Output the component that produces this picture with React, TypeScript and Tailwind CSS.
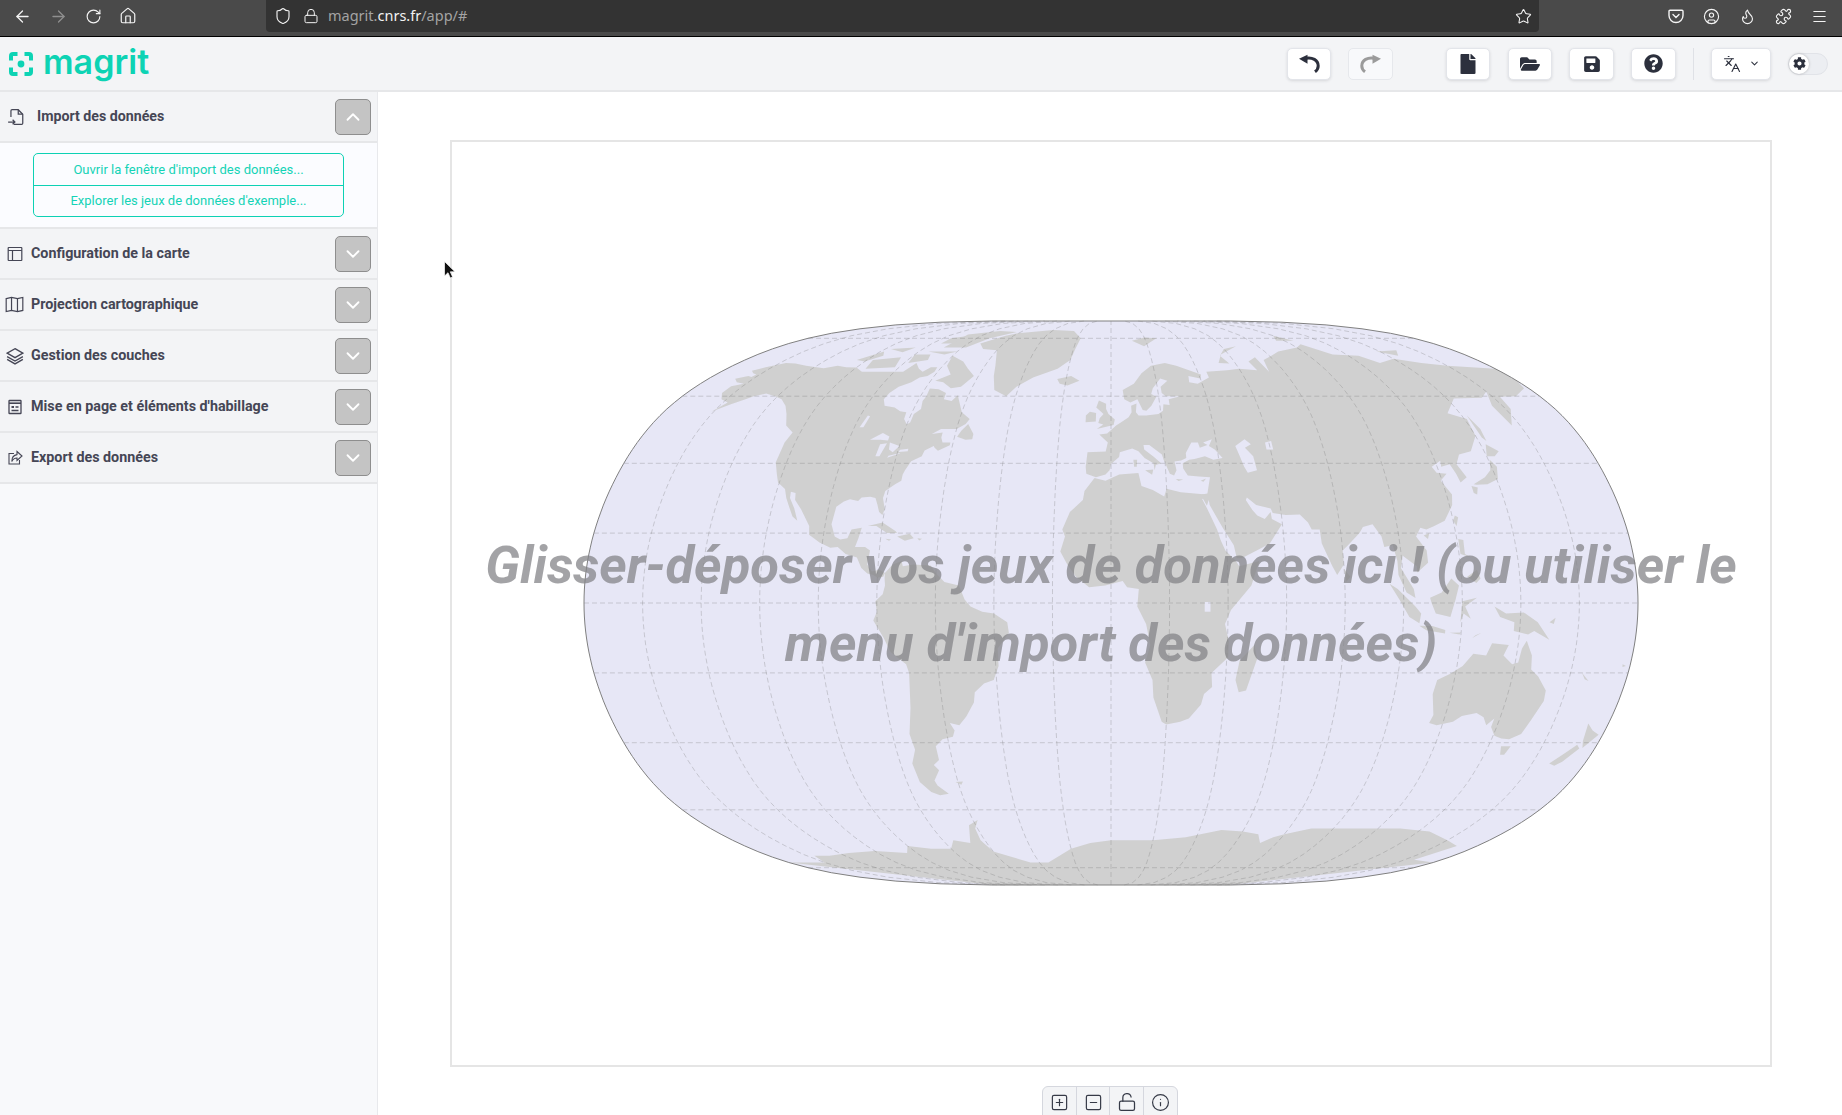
import React from "react";
import {
  ArrowLeft,
  ArrowRight,
  ChevronDown,
  ChevronUp,
  CircleUser,
  Flame,
  Home,
  Info,
  Languages,
  Lock,
  LockOpen,
  Menu,
  Puzzle,
  RotateCw,
  Shield,
  SquareMinus,
  SquarePlus,
  Star,
} from "lucide-react";
import { FaCog, FaFile, FaFolderOpen, FaQuestionCircle, FaSave } from "react-icons/fa";

type Pt = [number, number];

// natural earth 2, same as the app's default projection
const K = 198;
const CX = 659;
const CY = 461;
const project = (lon: number, lat: number): Pt => {
  const l = (lon * Math.PI) / 180;
  const p = (lat * Math.PI) / 180;
  const p2 = p * p;
  const p4 = p2 * p2;
  const p6 = p2 * p4;
  const x = l * (0.84719 - 0.13063 * p2 + p6 * p6 * (-0.04515 + 0.05494 * p2 - 0.02326 * p4 + 0.00331 * p6));
  const y = p * (1.01183 + p4 * p4 * (-0.02625 + 0.01926 * p2 - 0.00396 * p4));
  return [CX + K * x, CY - K * y];
};

const toPath = (pts: Pt[], close = true) =>
  pts
    .map((c, i) => {
      const [x, y] = project(c[0], c[1]);
      return `${i ? "L" : "M"}${x.toFixed(1)} ${y.toFixed(1)}`;
    })
    .join("") + (close ? "Z" : "");

const range = (from: number, to: number, step: number) => {
  const out: number[] = [];
  if (step > 0) for (let v = from; v <= to; v += step) out.push(v);
  else for (let v = from; v >= to; v += step) out.push(v);
  return out;
};

const LAND: Pt[][] = [
  // north america
  [[-168,65.6],[-164,66.5],[-162,66.2],[-161.5,67],[-164,67.5],[-166.5,68.3],[-163,69.5],[-157,71],[-152,70.8],[-145,70],[-140,69.6],[-135,69.2],[-130,70],[-125,69.5],[-120,69.4],[-115,68],[-110,68],[-105,68],[-100,68],[-96,68],[-94,71],[-90,69],[-87,68],[-85,69.5],[-82,69.5],[-81.5,68],[-83,66.5],[-86,66],[-88,64.5],[-92,63],[-94,61],[-94.5,59],[-92.5,57],[-88,56.5],[-85,55.3],[-82.3,55],[-82,53],[-80,51.3],[-79,52],[-79,54.5],[-77,56],[-78,58.5],[-77.5,60],[-78,62.4],[-74,62.2],[-70,61],[-69.5,59],[-66,58.5],[-64.5,60.3],[-62,57.5],[-60,55],[-56,53],[-57,51.5],[-60,50],[-66,50],[-69,48.5],[-65,49],[-65,47.5],[-64,46],[-61,46],[-61,45.2],[-65,43.6],[-66.5,44.5],[-67,45],[-70,43.7],[-70.5,42],[-74,40.6],[-75.5,38],[-76,36.8],[-76,35],[-78,34],[-81,32],[-81.3,30],[-80,26.8],[-80.5,25.2],[-81.8,26],[-82.8,28],[-84,30],[-86,30.4],[-89,30.2],[-90,29.2],[-93,29.7],[-95,29],[-97.3,27.5],[-97.5,25],[-97.8,22.5],[-96,19],[-94,18.2],[-91.5,18.5],[-90.5,21],[-87,21.5],[-87.7,18.5],[-88.5,16],[-85,16],[-83.2,15],[-83.7,11],[-82,9],[-79.5,9.5],[-77.5,8.6],[-78,7.5],[-80,7.3],[-81.5,8],[-83.5,8.4],[-85.7,10],[-87.5,13],[-91.5,14],[-94.5,16],[-97,15.8],[-101,17.3],[-105,19.5],[-105.5,22],[-108,25],[-109.5,26.7],[-112.5,29.5],[-113,31.5],[-114.8,31.8],[-114.5,30],[-112,27],[-110,23.5],[-112,24.7],[-114,27.5],[-115.8,30],[-117.2,32.6],[-120.5,34.5],[-122,37],[-124,40.3],[-124,46],[-123,49],[-127,51],[-130,54.5],[-133,57],[-137,59],[-141,60],[-146,60.8],[-150,60],[-152,59],[-156,57.5],[-161,55.2],[-158,58],[-162,59],[-165,61],[-165,63.2],[-161,64],[-165,64.5]],
  // greenland + arctic canada
  [[-73,78],[-68,76],[-60,75.5],[-55,70],[-53,66.5],[-50,62],[-44,60],[-41,63],[-35,66],[-25,69],[-20,72],[-19,76],[-18,80],[-25,83],[-40,83.5],[-60,82],[-65,81]],
  [[-80,73.5],[-72,71.5],[-67,69],[-62,66.5],[-65,63],[-69,62.5],[-74,64.5],[-78,65],[-73,67],[-78,70]],
  [[-117,72],[-105,73],[-102,69.5],[-115,69]],
  [[-90,76.5],[-78,76.5],[-72,80],[-62,82.5],[-75,83],[-90,81.5]],
  [[-125,72],[-118,75],[-115,73.5],[-120,71.5]],
  [[-95,75],[-80,75],[-85,74]],
  [[-100,74],[-92,74],[-90,72],[-98,71]],
  [[-117,76],[-105,76.5],[-108,74.8]],
  [[-95,80],[-87,81],[-88,78],[-95,78]],
  [[-59,47.7],[-55.5,46.8],[-53,47],[-53,48.5],[-56,51.5],[-58,49.5]],
  // caribbean
  [[-85,22],[-80,23],[-75,20.5],[-74.5,20],[-78,20],[-82,22]],
  [[-74.3,19],[-70,19.8],[-68.5,18.5],[-71.5,17.8]],
  [[-78.3,18.4],[-76.3,18.2],[-77,17.8]],
  [[-67.2,18.5],[-65.6,18.4],[-66.5,17.9]],
  // south america
  [[-77.5,8.6],[-75,11],[-72,12],[-71.5,10.5],[-68,11],[-62,10.7],[-60,8.5],[-57,6],[-52,5],[-50,1],[-48,-1],[-44,-2.5],[-40,-3],[-35.5,-5.5],[-35,-8.5],[-39,-13],[-39,-18],[-41,-22],[-44.5,-23],[-48,-25.5],[-48.7,-28.5],[-52,-32.5],[-55,-35],[-58.3,-34.3],[-57,-36.5],[-58,-38.3],[-62,-39],[-65,-41],[-65,-45],[-67.5,-46.5],[-66,-48],[-69,-51],[-68.5,-52.5],[-65.2,-55],[-69,-55.5],[-72,-54.5],[-75,-51.5],[-75.5,-46],[-73,-42],[-73.7,-37.5],[-71.5,-30],[-70.3,-20],[-71,-17.5],[-76,-14],[-78,-10],[-81.3,-5],[-80,-2.5],[-80.5,0.5],[-78,2.5],[-77.3,5],[-77.5,7]],
  [[-61,-51.5],[-58,-51.3],[-59,-52.3]],
  // africa
  [[-6,35.8],[-2,35],[3,36.8],[10,37.2],[11,33.5],[15,32.3],[19,30.5],[20,32.7],[25,31.7],[32,31.2],[34.5,31],[32.5,29.7],[34,27],[37,21],[38,18],[39.5,15],[43,12],[44,10.5],[51,12],[48,5],[41,-2],[39,-6],[40.5,-11],[40.5,-15.5],[35,-20],[35.5,-24],[32.8,-26],[32,-29],[28,-33],[25,-34],[20,-34.8],[18.3,-34],[15,-27],[14.5,-22],[11.8,-17],[13.5,-12],[12,-6],[9,-1],[9.5,4],[5.5,4.5],[4,6.3],[-2,5],[-7.5,4.5],[-12,7.5],[-15,11],[-17.5,14.7],[-16,19],[-17,21],[-14.5,26],[-10,29.5],[-9.5,32]],
  // eurasia
  [[-5.5,36],[-9,37],[-9.3,39],[-8.8,43.2],[-2,43.4],[-1.2,46],[-4.5,48.4],[-1.5,48.7],[2,51],[4,52],[7,53.5],[8.3,55],[8.2,57],[10.5,57.7],[10,55],[11,54],[14,54],[19,54.5],[21,55.5],[21.5,57.5],[24,57.2],[24,59],[29,60],[23,60],[21.5,61],[21.5,63],[25,65],[22,65.7],[18,62.5],[17,60.7],[19,59.8],[16.5,57],[14.3,55.5],[12.8,55.7],[11,59],[8,58],[5.5,59],[5,62],[10,64],[14,67.5],[19,70],[26,71],[31,70],[41,67],[40,65.7],[35,66.5],[34.5,64.5],[38,64],[44,66],[44,68],[54,68.5],[60,69],[68,68.5],[67,71.5],[72,73],[73,68],[75,72],[81,73.5],[87,75],[100,76.5],[105,77.7],[113,74],[125,73.5],[130,71],[140,72.5],[150,71],[160,70],[170,69.5],[180,69],[180,65],[178,62.5],[170,60],[163,59.8],[162,56],[156.7,51],[155.7,57],[160,61.5],[155,59.5],[143,59.3],[135,54.7],[141,53],[140,48],[135,43.5],[130,42.5],[127.5,39.7],[129.4,36],[126.5,34.5],[126,37],[125,39.7],[121.5,39],[122,40.7],[118,39],[119,37.3],[122.5,37],[119.5,35],[122,31],[121,28],[117,23.5],[113,22],[110,21],[108,21.5],[106,19],[109,15],[109,11.5],[105,8.7],[105,10.5],[102,12.5],[100.5,13.5],[99.5,10],[103.5,4],[104,1.4],[101,3],[98.5,8],[98.5,12],[97.5,16.5],[94.5,16],[94,19],[91.5,22.5],[88,21.7],[86.5,20],[82,16.5],[80,15],[80,11],[77.5,8],[76,10.5],[73,17],[72.8,21],[70,21],[69,23],[66.5,25.3],[61.5,25.2],[57,25.7],[56.5,27],[51.5,28],[48.5,30.2],[48,29.5],[50,26.5],[51.5,25],[54,24],[56.3,26],[56.5,24],[59.8,22.5],[55,17],[52,15.7],[45,12.8],[43.3,12.8],[42.5,16.5],[39,21.5],[35,28],[34.8,29.5],[34,27.8],[32.8,29.8],[32.5,31],[34.5,31.3],[36,36],[32,36.2],[28,36.5],[26.5,38.5],[26.5,40],[29,41],[31,41.2],[35,42],[38,41],[41.5,41.5],[39,44],[37,45],[38.5,47],[35,46],[36.5,45.3],[33.5,44.5],[33,46],[30.5,46],[28,43],[28,41.5],[26,40.8],[23.5,40.5],[24,38],[23,36.5],[21.5,37],[19.5,41],[19,42.5],[14.5,45.3],[12.3,45.3],[12.5,44],[16,41.8],[18.5,40],[16.5,39.5],[16,38],[15.7,40],[12.5,41.5],[10.3,43.5],[8,44.3],[3.3,43.2],[3,41.8],[0,39.8],[-0.5,38],[-2,36.8]],
  // european and arctic islands
  [[-5.5,50],[1,51.2],[1.5,52.8],[-1,54.5],[-2,56],[-2,57.6],[-5,58.6],[-6,56.5],[-3,54.5],[-4.5,53.2],[-5,51.8],[-3,51.3]],
  [[-10,52],[-6,52.2],[-6,54.8],[-8.5,55.2],[-10,54]],
  [[-24,65.5],[-18,66.5],[-14,65],[-19,63.4],[-22.5,64]],
  [[12,79],[20,80.3],[27,80],[18,77]],
  [[52,71],[56,74],[68,77],[60,76],[55,73.5],[57,70.8]],
  [[95,79],[105,79],[100,81]],
  [[138,75],[150,75.5],[145,73.5]],
  [[8.3,41],[9.7,41],[9.5,39],[8.5,39]],
  [[12.5,38],[15.5,38.2],[15,36.7]],
  [[23.5,35.5],[26.2,35.3],[24.5,34.9]],
  [[32.5,35],[34.5,35.6],[33.5,34.7]],
  // east asia islands
  [[142,54],[143.5,50],[143,46.5],[142,47.5]],
  [[140,42],[142,45.5],[145.5,43.5],[143,42]],
  [[131,34],[136,36],[139,38],[140.5,41],[142,39],[140.5,35.5],[136,34],[132,33.8]],
  [[130,33.5],[132,33],[131,31],[130,31.5]],
  [[121,25],[122,24.5],[120.8,22],[120,23.5]],
  [[108.7,19.3],[110.8,20],[110,18.3]],
  [[120.5,18.3],[122.2,18],[122,14],[124,13],[120.5,14]],
  [[122,7.5],[125.5,9.5],[126.5,7],[125,5.7]],
  [[95.3,5.5],[98,4],[104,-1],[106,-3],[105.5,-5.8],[102,-4],[98.5,1]],
  [[105.5,-6.5],[110,-6.6],[114.5,-7.7],[114.5,-8.7],[108,-7.8]],
  [[109,1.5],[113,3],[116.5,7],[119,5],[117.7,1],[116,-4],[111,-3],[109.5,0]],
  [[119.5,-5.5],[120,0.5],[125,1.5],[121,-1],[123,-4.5],[120.5,-3]],
  [[131,-1],[135,-3],[141,-2.7],[146,-5.5],[150.5,-10.5],[145,-8],[143,-9],[138,-8],[138,-5.5],[133,-4]],
  [[124,-10],[127,-8.5],[125,-9.2]],
  [[116,-8.5],[120,-8.4],[119.5,-9]],
  [[80,9.7],[82,7.5],[80.5,6]],
  [[49.3,-12],[50.5,-16],[47.5,-25],[45,-25.5],[43.5,-22],[44.5,-16.5]],
  // oceania
  [[114,-22],[113.5,-26],[115.7,-32],[115,-34.3],[118,-35],[123.5,-34],[126,-32.3],[131,-31.5],[134,-32.7],[136,-35],[138,-33],[138,-35.5],[140.5,-38],[143.5,-38.8],[146.5,-39],[150,-37.5],[151.5,-33.5],[153.5,-28],[153,-25],[149,-21],[146,-19],[145.3,-15],[142.8,-10.8],[141.5,-13],[141,-17],[139,-17.5],[135.5,-15],[136.8,-12],[131,-11.5],[129.5,-15],[125,-14.5],[122,-18],[118,-20.3]],
  [[144.7,-41],[148.3,-41],[147.5,-43.5],[146,-43.5]],
  [[172.7,-34.5],[175.5,-36.5],[178.5,-37.7],[175.3,-41.5],[174,-39.5]],
  [[172.7,-40.6],[174.3,-41.7],[171,-45.5],[169,-46.7],[166.5,-46],[170,-43]],
  [[164,-20],[167,-22.3],[165.5,-21.8]],
  [[177.3,-17.5],[178.6,-18],[177.5,-18.3]],
  [[150,-5.5],[152,-4.2],[151.5,-6]],
  // antarctica, closed along the pole
  [[-180,-78],[-160,-78],[-156,-75.5],[-148,-75.5],[-135,-74.5],[-120,-73.8],[-105,-74.5],[-100,-72],[-90,-73],[-80,-73],[-75,-70],[-68,-71],[-63,-65],[-58,-63.3],[-61,-66],[-62,-70],[-60,-74],[-45,-78],[-35,-78],[-20,-73],[-10,-71],[0,-70],[20,-70],[35,-69],[50,-66.5],[60,-67],[68,-68],[72,-71],[76,-69],[80,-68],[90,-66],[110,-66],[130,-66],[145,-67],[160,-70],[170,-72],[165,-77],[180,-78],...range(180, -180, -10).map((lon): Pt => [lon, -90])],
];

const LAKES: Pt[][] = [
  [[-92,46.8],[-88,48.8],[-85,47.8],[-85,46.6],[-88,46.8]],
  [[-87.8,42],[-86.3,42],[-85,45.8],[-87.5,45.5]],
  [[-84,46],[-80,45],[-81.8,43.2],[-83.5,44]],
  [[-83.3,41.6],[-79,42.8],[-79,43],[-83,42.2]],
  [[-79.7,43.3],[-76.3,43.5],[-76.3,44.2],[-79.3,43.9]],
  [[-98,50.5],[-97,54],[-96,53.8],[-96.5,50.5]],
  [[47,45],[51,47],[53,45.5],[50.5,44.5],[53,42],[53.5,38],[50,37.3],[49,39],[48,42]],
  [[58.5,46],[61,46.5],[61,44],[58.5,44]],
  [[32,-2.5],[34,-2.5],[34,0.3],[32,0.3]],
];

const OUTLINE = toPath([
  ...range(-90, 90, 2).map((lat): Pt => [-180, lat]),
  ...range(90, -90, -2).map((lat): Pt => [180, lat]),
]);
const MERIDIANS = range(-160, 160, 20).map((lon) => toPath(range(-90, 90, 3).map((lat): Pt => [lon, lat]), false));
const PARALLELS = range(-80, 80, 20).map((lat) => toPath(range(-180, 180, 5).map((lon): Pt => [lon, lat]), false));

const WorldMap = () => (
  <svg viewBox="0 0 1318 923" className="block w-full h-full">
    <path d={OUTLINE} fill="#e7e7f6" />
    {LAND.map((poly, i) => (
      <path key={i} d={toPath(poly)} fill="#d0d0d0" />
    ))}
    {LAKES.map((poly, i) => (
      <path key={i} d={toPath(poly)} fill="#e7e7f6" />
    ))}
    {[...MERIDIANS, ...PARALLELS].map((d, i) => (
      <path key={i} d={d} fill="none" stroke="#787878" strokeOpacity="0.3" strokeWidth="1" strokeDasharray="5 3" />
    ))}
    <path d={OUTLINE} fill="none" stroke="#808080" strokeWidth="1" />
  </svg>
);

const Logo = () => (
  <div className="w-[141px] flex items-center gap-[10px] text-[#0dd3b4]">
    <svg width="24" height="24" viewBox="0 0 24 24" fill="none" stroke="currentColor" strokeWidth="4">
      <path d="M8.5 2H4Q2 2 2 4V8.5M15.5 2H20Q22 2 22 4V8.5M2 15.5V20Q2 22 4 22H8.5M22 15.5V20Q22 22 20 22H15.5" />
      <circle cx="12" cy="12" r="3.4" fill="currentColor" stroke="none" />
    </svg>
    <span className="[font-family:Inter,sans-serif] font-semibold text-[34px] leading-none -mt-[3px]">magrit</span>
  </div>
);

const BrowserBar = () => (
  <div className="h-[37px] shrink-0 bg-[#4a4a4a] border-b border-black flex items-start text-[#f4f4f4]">
    <div className="flex items-center h-[32px] pl-[13px] gap-[17px] w-[266px]">
      <ArrowLeft size={19} strokeWidth={1.6} />
      <ArrowRight size={19} strokeWidth={1.6} className="text-[#8f8f8f]" />
      <RotateCw size={17} strokeWidth={1.6} />
      <Home size={18} strokeWidth={1.6} />
    </div>
    <div className="w-[1273px] h-[32px] bg-[#333333] rounded-b-[4px] flex items-center pl-[8px] pr-[7px] text-[14.5px] [font-family:'Noto_Sans',sans-serif]">
      <Shield size={18} strokeWidth={1.5} />
      <Lock size={16} strokeWidth={1.5} className="ml-[11px]" />
      <span className="ml-[9px] text-[#a3a3a3]">
        magrit.<span className="text-[#f2f2f2]">cnrs.fr</span>/app/#
      </span>
      <Star size={17} strokeWidth={1.5} className="ml-auto" />
    </div>
    <div className="flex-1 h-[32px] flex items-center justify-end pr-[14px] gap-[19px]">
      <svg width="16" height="16" viewBox="0 0 16 16" fill="none" stroke="currentColor" strokeWidth="1.4">
        <path d="M2 2.2H14Q15 2.2 15 3.2V7.5A7 7 0 0 1 1 7.5V3.2Q1 2.2 2 2.2Z" />
        <path d="M5 6.5L8 9.5L11 6.5" strokeLinecap="round" />
      </svg>
      <CircleUser size={17} strokeWidth={1.6} />
      <Flame size={17} strokeWidth={1.6} />
      <Puzzle size={17} strokeWidth={1.6} />
      <Menu size={17} strokeWidth={1.6} />
    </div>
  </div>
);

const UndoIcon = ({ flip }: { flip?: boolean }) => (
  <svg width="21" height="19" viewBox="0 0 21 19" className={flip ? "-scale-x-100" : ""}>
    <path d="M0 4.7L8.5 0.7V9.7Z" fill="currentColor" />
    <path d="M7 4.2C13 3 19.3 6 19.2 12C19.2 14.5 17.8 16.5 16 17.8" fill="none" stroke="currentColor" strokeWidth="3" />
  </svg>
);

const toolBtn =
  "h-[32px] rounded-[5px] bg-white border border-[#e3e5ea] shadow-[0_1px_3px_rgba(40,45,60,0.14)] flex items-center justify-center text-[#2c303d]";

const Header = () => (
  <header className="h-[55px] shrink-0 bg-[#f3f4f6] border-b-2 border-[#e6e7e9] flex items-center pl-[9px]">
    <Logo />
    <div className="ml-[1137px] flex items-center">
      <button className={`${toolBtn} w-[44px]`}>
        <UndoIcon />
      </button>
      <button className="h-[32px] w-[45px] ml-[17px] rounded-[5px] bg-[#f8f9fb] border border-[#e6e8ec] flex items-center justify-center text-[#9b9b9b]">
        <UndoIcon flip />
      </button>
      <button className={`${toolBtn} w-[44px] ml-[53px]`}>
        <FaFile size={20} />
      </button>
      <button className={`${toolBtn} w-[44px] ml-[18px]`}>
        <FaFolderOpen size={20} />
      </button>
      <button className={`${toolBtn} w-[45px] ml-[17px]`}>
        <FaSave size={18} />
      </button>
      <button className={`${toolBtn} w-[45px] ml-[17px]`}>
        <FaQuestionCircle size={19} />
      </button>
      <div className="w-px h-[32px] bg-[#dfe1e6] ml-[17px]" />
      <button className={`${toolBtn} w-[60px] ml-[17px] gap-[8px]`}>
        <Languages size={18} strokeWidth={1.5} />
        <ChevronDown size={11} strokeWidth={2.2} />
      </button>
      <div className="w-[40px] h-[22px] ml-[17px] rounded-full bg-[#eceef2] border border-[#e1e3e8] flex items-center">
        <span className="w-[20px] h-[20px] rounded-full bg-white shadow-[0_0_3px_rgba(0,0,0,0.25)] flex items-center justify-center text-[#2c303d]">
          <FaCog size={13} />
        </span>
      </div>
    </div>
  </header>
);

// sidebar icons, drawn on a 16 box
const sideIcon = { fill: "none", stroke: "currentColor", strokeWidth: 1.2, viewBox: "0 0 16 16" };

const ImportIcon = () => (
  <svg {...sideIcon} width="18" height="18" strokeWidth={1.1} className="shrink-0">
    <path d="M3.5 8V2.5Q3.5 1.5 4.5 1.5H10L14 5.5V13.5Q14 14.5 13 14.5H6" />
    <path d="M10 1.5V5.5H14" />
    <path d="M1 12.5H7M5 10.5L7 12.5L5 14.5" />
  </svg>
);
const ConfigIcon = () => (
  <svg {...sideIcon} width="16" height="16">
    <rect x="1.2" y="1.5" width="13.6" height="13" rx="0.5" />
    <path d="M1.2 4.5H14.8M5.5 4.5V14.5" />
  </svg>
);
const ProjIcon = () => (
  <svg {...sideIcon} width="19" height="19" strokeWidth={1}>
    <path d="M1 3L5.5 2L10.5 3L15 2V13L10.5 14L5.5 13L1 14Z" />
    <path d="M5.5 2V13M10.5 3V14" />
  </svg>
);
const LayersIcon = () => (
  <svg {...sideIcon} width="18" height="18">
    <path d="M8 1.5L15 5.5L8 9.5L1 5.5Z" />
    <path d="M1 8.5L8 12.5L15 8.5" />
    <path d="M1 11L8 15L15 11" />
  </svg>
);
const LayoutIcon = () => (
  <svg {...sideIcon} width="16" height="16" strokeWidth={1.3}>
    <rect x="2" y="1.5" width="12" height="13" rx="0.6" />
    <path d="M2 4.2H14" strokeWidth={1.6} />
    <rect x="4.5" y="7" width="2.5" height="2" fill="currentColor" stroke="none" />
    <path d="M8.5 8H11.5M4.5 11.5H11.5" />
  </svg>
);
const ExportIcon = () => (
  <svg {...sideIcon} width="16" height="16" strokeWidth={1.1}>
    <path d="M7 3.5H2V14H12.5V10" />
    <path d="M10 1.5L15 6L10 10.5V8C7.5 8 6 9 4.8 11.5C4.8 7.5 7 5 10 4.6Z" />
  </svg>
);

const SECTIONS = [
  { title: "Configuration de la carte", icon: <ConfigIcon /> },
  { title: "Projection cartographique", icon: <ProjIcon /> },
  { title: "Gestion des couches", icon: <LayersIcon /> },
  { title: "Mise en page et éléments d'habillage", icon: <LayoutIcon /> },
  { title: "Export des données", icon: <ExportIcon /> },
];

const ToggleBtn = ({ open }: { open?: boolean }) => (
  <button className="ml-auto w-[36px] h-[36px] rounded-[5px] bg-[#c4c4c4] border border-[#8e8e8e] flex items-center justify-center text-white">
    {open ? <ChevronUp size={22} strokeWidth={2} /> : <ChevronDown size={22} strokeWidth={2} />}
  </button>
);

const Sidebar = () => (
  <aside className="w-[378px] shrink-0 bg-[#f8f9fb] border-r border-[#e8e9ec] text-[#454655]">
    <div className="h-[51px] bg-[#f3f4f6] border-b-2 border-[#e6e7e9] flex items-center pl-[7px] pr-[6px] font-bold text-[14.2px]">
      <ImportIcon />
      <span className="ml-[12px]">Import des données</span>
      <ToggleBtn open />
    </div>
    <div className="h-[86px] bg-[#fbfcff] border-b-2 border-[#e6e7e9] pt-[10px] pl-[33px]">
      <div className="w-[311px] h-[64px] rounded-[5px] border border-[#0dd1b4] flex flex-col text-[13px] text-[#14d3b6]">
        <button className="h-[32px] border-b border-[#0dd1b4]">Ouvrir la fenêtre d'import des données...</button>
        <button className="flex-1">Explorer les jeux de données d'exemple...</button>
      </div>
    </div>
    {SECTIONS.map((s) => (
      <div
        key={s.title}
        className="h-[51px] bg-[#f3f4f6] border-b-2 border-[#e6e7e9] flex items-center pl-[5px] pr-[6px] font-bold text-[14.3px]"
      >
        <span className="w-[19px] flex justify-center shrink-0">{s.icon}</span>
        <span className="ml-[7px]">{s.title}</span>
        <ToggleBtn />
      </div>
    ))}
  </aside>
);

const MapToolbar = () => (
  <div className="mt-[19px] self-center flex h-[40px] shrink-0 bg-[#f3f4f6] border border-[#d5d7de] rounded-t-[6px] text-[#363a47]">
    <div className="w-[34px] flex items-start pt-[6px] justify-center border-r border-[#d5d7de]">
      <SquarePlus size={19} strokeWidth={1.5} />
    </div>
    <div className="w-[33px] flex items-start pt-[6px] justify-center border-r border-[#d5d7de]">
      <SquareMinus size={19} strokeWidth={1.5} />
    </div>
    <div className="w-[34px] flex items-start pt-[5px] justify-center border-r border-[#d5d7de]">
      <LockOpen size={20} strokeWidth={1.5} />
    </div>
    <div className="w-[33px] flex items-start pt-[6px] justify-center">
      <Info size={19} strokeWidth={1.5} />
    </div>
  </div>
);

export default function App() {
  return (
    <div className="relative h-screen w-full overflow-hidden flex flex-col bg-white [font-family:Roboto,sans-serif]">
      <BrowserBar />
      <Header />
      <div className="flex flex-1 min-h-0">
        <Sidebar />
        <main className="flex-1 min-w-0 flex flex-col overflow-hidden pt-[48px]">
          <div className="relative w-[1322px] h-[927px] ml-[72px] shrink-0 border-2 border-[#e5e5e5]">
            <WorldMap />
            <div className="absolute inset-0 flex items-center justify-center text-center">
              <p className="italic font-bold text-[52.5px] leading-[78px] text-[#848488]/75">
                Glisser-déposer vos jeux de données ici ! (ou utiliser le menu d'import des données)
              </p>
            </div>
          </div>
          <MapToolbar />
        </main>
      </div>
      {/* mouse pointer caught by the screenshot */}
      <svg className="absolute left-[444px] top-[261px]" width="12" height="18" viewBox="0 0 12 18">
        <path d="M0.5 0.5V15L4 11.7L6.3 17L8.6 16L6.3 10.8H11Z" fill="#111" stroke="#fff" strokeWidth="0.7" />
      </svg>
    </div>
  );
}
